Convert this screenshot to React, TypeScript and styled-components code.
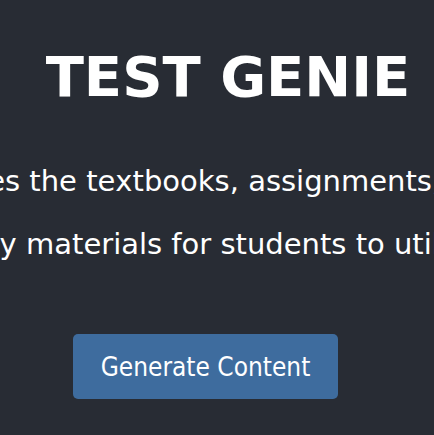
import React from "react";
import styled, { createGlobalStyle } from "styled-components";

const GlobalStyle = createGlobalStyle`
  html, body {
    margin: 0;
    padding: 0;
    background: #282c34;
    overflow: hidden;
  }
  #root {
    min-height: 100vh;
  }
`;

const Page = styled.main`
  box-sizing: border-box;
  width: 100%;
  min-height: 100vh;
  padding: 44px 0 0 22px;
  display: flex;
  flex-direction: column;
  align-items: center;
  overflow: hidden;
  background: #282c34;
  color: #ffffff;
  font-family: "DejaVu Sans", Verdana, sans-serif;
  font-kerning: none;
`;

const Title = styled.h1`
  margin: 0;
  font-size: 56px;
  line-height: 65px;
  font-weight: 700;
  white-space: nowrap;
`;

const Line = styled.p<{ $gap: number }>`
  margin: ${(p) => p.$gap}px 0 0;
  font-size: 29px;
  line-height: 34px;
  white-space: nowrap;
  flex-shrink: 0;
  text-align: center;
`;

const GenerateButton = styled.button`
  margin: 73px 45px 0 0;
  width: 265px;
  height: 65px;
  border: none;
  border-radius: 5px;
  background: #3e6c9e;
  color: #ffffff;
  font-family: "DejaVu Sans Condensed", "DejaVu Sans", sans-serif;
  font-stretch: condensed;
  font-size: 26px;
  cursor: pointer;
`;

export default function App() {
  return (
    <>
      <GlobalStyle />
      <Page>
        <Title>TEST GENIE</Title>
        <Line $gap={55}>
          Test Genie analyzes the textbooks, assignments, and lecture videos.
        </Line>
        <Line $gap={29}>
          It creates study materials for students to utilize at any time.
        </Line>
        <GenerateButton type="button">Generate Content</GenerateButton>
      </Page>
    </>
  );
}
